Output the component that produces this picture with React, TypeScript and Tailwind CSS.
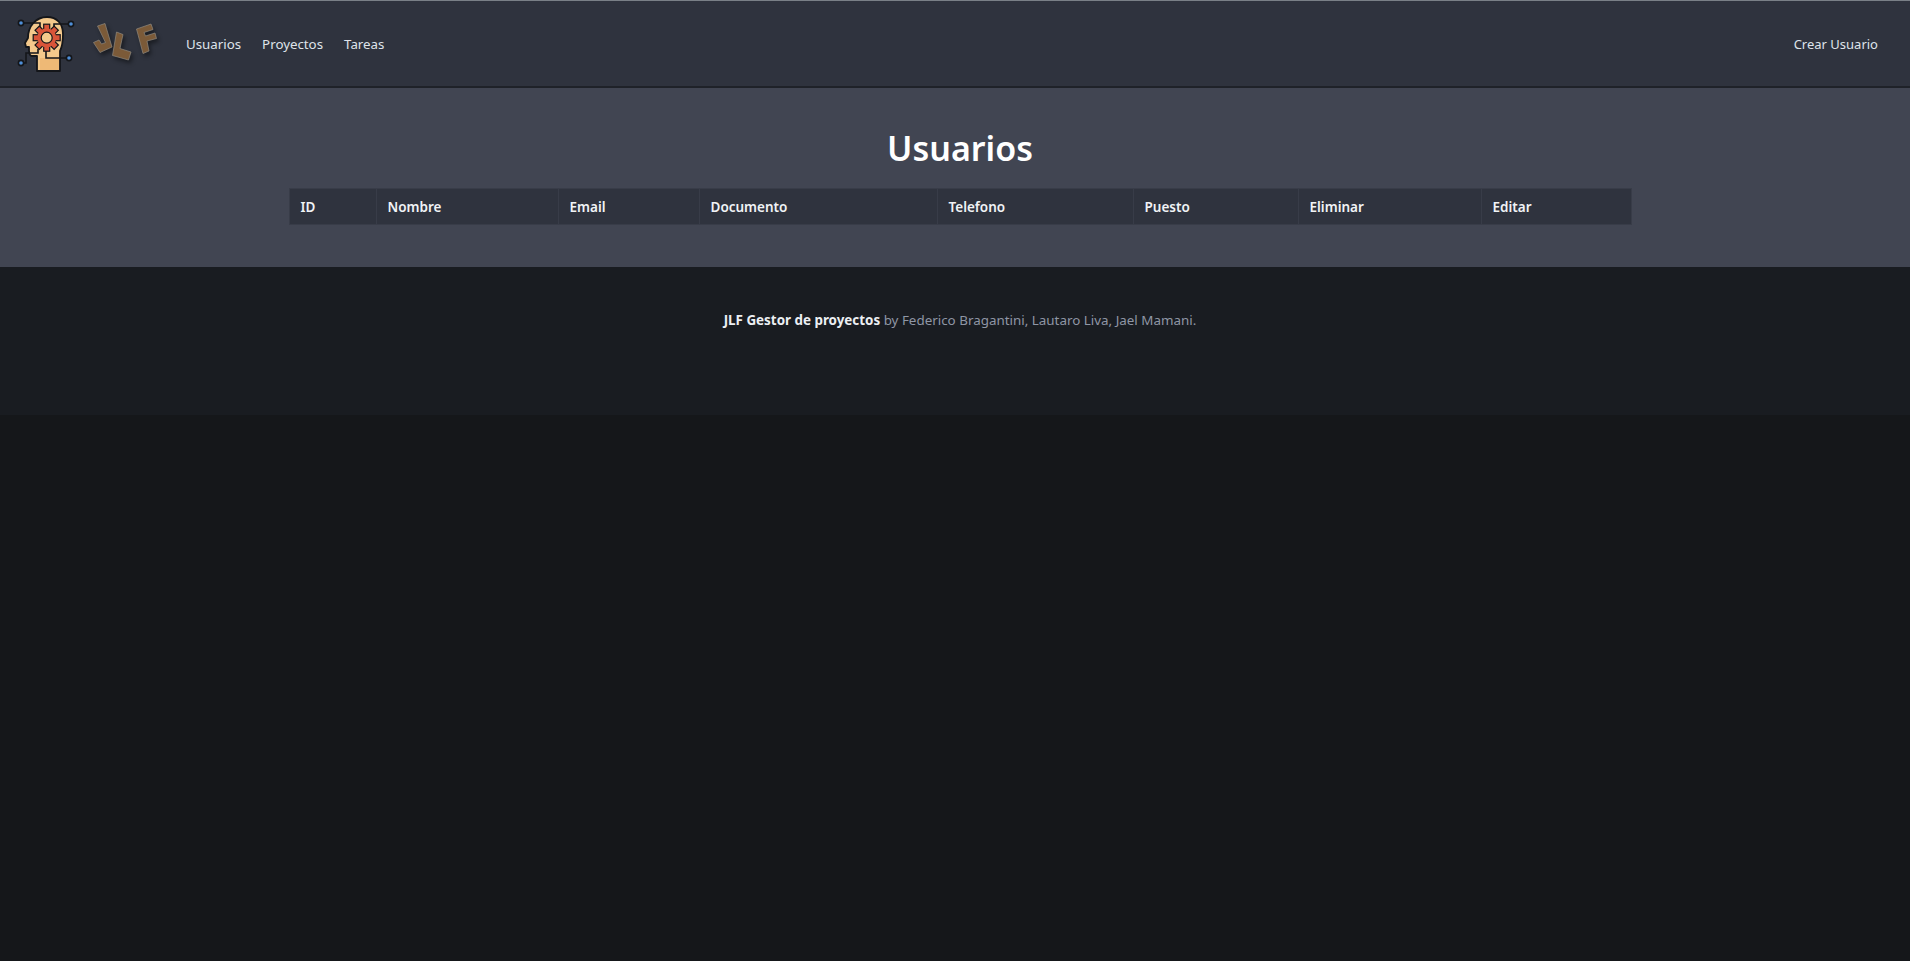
import React from 'react';

const font = { fontFamily: '"Noto Sans", "Open Sans", sans-serif' };

const columns = [
  { label: 'ID', width: 'w-[87px]' },
  { label: 'Nombre', width: 'w-[182px]' },
  { label: 'Email', width: 'w-[141px]' },
  { label: 'Documento', width: 'w-[238px]' },
  { label: 'Telefono', width: 'w-[196px]' },
  { label: 'Puesto', width: 'w-[165px]' },
  { label: 'Eliminar', width: 'w-[183px]' },
  { label: 'Editar', width: 'w-[149px]' },
];

const gearTeeth = [0, 45, 90, 135, 180, 225, 270, 315];

const HeadLogo = () => (
  <svg viewBox="0 0 60 60" className="w-[60px] h-[60px] shrink-0">
    <path d="M21 57 V42 H16 C13 42 13 38 13 36 V33 H10 L9 29 L12 24 C12 12 20 3 31 3 C41 3 47 10 47 20 C47 27 46 33 44 37 V57 Z" fill="#f4c98c" stroke="#14161a" strokeWidth="1.8" strokeLinejoin="round" />
    <path d="M24 44 H43 V56 H24 Z" fill="#eeb976" />
    <g fill="none" stroke="#14161a" strokeWidth="1.6">
      <path d="M5 9 H24 V14 M55 10 H38 V14 M53 44 H30 V36 M5 49 H10 V39 H22 V35" />
    </g>
    <g transform="translate(30.7 23.7)">
      {gearTeeth.map((deg) => (
        <rect key={deg} x="-3" y="-13.5" width="6" height="7" fill="#d9553a" stroke="#14161a" strokeWidth="1.2" transform={`rotate(${deg})`} />
      ))}
      <circle r="9.5" fill="#d9553a" />
      <circle r="5.5" fill="#f4c98c" stroke="#14161a" strokeWidth="1.2" />
    </g>
    <g fill="#4f8fd8" stroke="#14161a" strokeWidth="1.6">
      <circle cx="5" cy="9" r="2.6" />
      <circle cx="55" cy="10" r="2.6" />
      <circle cx="5" cy="49" r="2.6" />
      <circle cx="53" cy="44" r="2.6" />
    </g>
  </svg>
);

const LetterLogo = () => (
  <svg viewBox="0 0 80 55" className="w-[80px] h-[55px] shrink-0 drop-shadow-[2px_3px_2px_rgba(0,0,0,0.45)]">
    <g fill="#7b5a38" stroke="#8f8a80" strokeWidth="0.7">
      <path d="M12.5 11 L20 8.5 L27 32 L15 37.5 L8.5 27.5 L14 25 L16.5 29 L20.5 27.5 Z" />
      <path d="M31.5 17 L38 19.5 L35 33.5 L46 37 L43.5 45 L27.5 40.5 Z" />
      <path d="M51.5 14 L66 9 L68 14.5 L59 17.5 L60.5 21 L70 18 L71.5 23.5 L62 26 L64 36 L58 38.5 Z" />
    </g>
  </svg>
);

export default function App() {
  return (
    <div className="min-h-screen bg-[#15171a]" style={font}>
      {/* Navbar */}
      <nav className="h-[88px] bg-[#2f333e] border-t border-t-[#7a8087] border-b-2 border-b-[#1f2229] flex items-center pl-[16px] pr-[32px] text-[#dfe3ea]">
        <HeadLogo />
        <div className="ml-[9px] -mt-[2px]">
          <LetterLogo />
        </div>
        <div className="flex items-center gap-[21px] ml-[21px] pt-[2px] text-[13.3px]">
          <a>Usuarios</a>
          <a>Proyectos</a>
          <a>Tareas</a>
        </div>
        <a className="ml-auto pt-[2px] text-[13px]">Crear Usuario</a>
      </nav>

      {/* Main section */}
      <section className="h-[179px] bg-[#414552] flex flex-col items-center pt-[40px] pl-[10px]">
        <h1 className="text-[34px] leading-[40px] font-semibold text-white mb-[20px]">Usuarios</h1>
        <div className="flex h-[37px] bg-[#2f333e] border border-[#383c48]">
          {columns.map((col) => (
            <div key={col.label} className={`${col.width} flex items-center px-[11px] pt-[1px] text-[13.5px] font-semibold text-[#f1f3f6] border-r border-[#383c48] last:border-r-0`}>
              {col.label}
            </div>
          ))}
        </div>
      </section>

      {/* Footer */}
      <footer className="h-[148px] bg-[#191c21] pt-[43px] pl-[10px] text-center text-[13.4px] leading-[21px] text-[#8f96a5]">
        <strong className="text-[#eceff3] font-bold">JLF Gestor de proyectos</strong> by Federico Bragantini, Lautaro Liva, Jael Mamani.
      </footer>
    </div>
  );
}
